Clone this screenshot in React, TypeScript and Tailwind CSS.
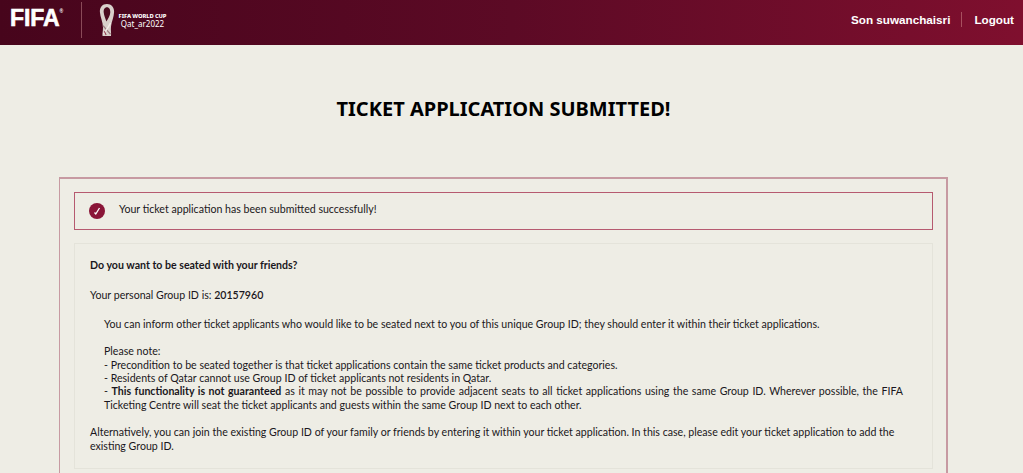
export default function App() {
  return (
    <div className="h-[473px] overflow-hidden bg-[#eeede5] font-['Lato','Noto_Sans',sans-serif] text-[#1a1720]">
      <header className="flex h-[45px] items-center justify-between bg-gradient-to-r from-[#47051c] via-[#5c0a25] to-[#7f0f2e] pl-[10px] pr-[9px]">
        <div className="mb-[5px] flex items-center">
          <span className="mb-[4px] flex w-[54px] items-start font-['Liberation_Sans',sans-serif] text-[23px] leading-none font-bold tracking-[-0.1px] text-white [-webkit-text-stroke:0.6px_white]">
            FIFA<span className="text-[5px] leading-[9px] [-webkit-text-stroke:0]">®</span>
          </span>
          <div className="ml-[17px] h-[36px] w-px bg-[#8a4a58]" />
          <svg width="16" height="34" viewBox="0 0 18 36" preserveAspectRatio="none" className="ml-[17px]" fill="none">
            <path d="M9 1C3.500 1 .8 4.500 1 9.500C1.300 15 4.500 20 4.500 26C4.500 30 3.500 33 4 35L13.500 35C14 32 13 29 13.500 25C14 20 16.800 15 17 9.500C17.200 4.500 14 1 9 1Z" fill="#d9d0cb" />
            <path d="M9 4.500C6.200 4.500 5 7 5.300 10C5.600 13 7.200 16.500 8.300 19.500C10.500 16.500 12.500 13 12.700 10C12.900 7 11.500 4.500 9 4.500Z" fill="#4b0a1f" />
            <path d="M4.500 24C7 27 10 30 13 33" stroke="#9d7c80" strokeWidth="1.500" />
            <path d="M13 21C11 25 8 29 5 33" stroke="#f3ece8" strokeWidth="1.500" />
            <path d="M6 30L8 34" stroke="#8f3a4d" strokeWidth="1.200" />
          </svg>
          <div className="ml-[3px] flex w-[49px] flex-col items-center font-['Noto_Sans',sans-serif] text-white">
            <span className="text-[5.800px] leading-[7px] font-extrabold tracking-[-0.1px] whitespace-nowrap">FIFA WORLD CUP</span>
            <span className="text-[8px] leading-[8px] whitespace-nowrap">Qat_ar2022</span>
          </div>
        </div>
        <div className="mb-[5px] flex items-center font-['Liberation_Sans',sans-serif] text-[11.700px] font-bold text-white">
          <span>Son suwanchaisri</span>
          <div className="mr-[12px] ml-[11px] h-[15px] w-px bg-[#a8505f]" />
          <span>Logout</span>
        </div>
      </header>
      <div className="w-[1007px]">
        <h1 className="mt-[50px] text-center font-['Noto_Sans',sans-serif] text-[20px] leading-[27px] font-bold text-black">TICKET APPLICATION SUBMITTED!</h1>
        <main className="mx-[59px] mt-[55px] border border-t-2 border-r-2 border-[#c79aa2] pt-[13px] pr-[13px] pb-[20px] pl-[14px]">
          <div className="flex h-[38px] items-center border border-[#b65a70] pl-[14px]">
            <span className="flex h-[16px] w-[16px] items-center justify-center rounded-full bg-[#8a1538]">
              <svg width="10" height="10" viewBox="0 0 10 10" fill="none">
                <path d="M2.500 6.500L3.800 8L7.500 2" stroke="white" strokeWidth="1.300" />
              </svg>
            </span>
            <span className="mb-[4px] ml-[14px] text-[10.600px] leading-[14px]">Your ticket application has been submitted successfully!</span>
          </div>
          <section className="mt-[13px] h-[226px] border border-[#e4e3da] px-[15px] pt-[15px] text-[10.600px] leading-[13.400px]">
            <p className="font-bold">Do you want to be seated with your friends?</p>
            <p className="mt-[17px]">Your personal Group ID is: <b className="font-semibold">20157960</b></p>
            <div className="mt-[15px] pr-[14px] pl-[14px]">
              <p>You can inform other ticket applicants who would like to be seated next to you of this unique Group ID; they should enter it within their ticket applications.</p>
              <p className="mt-[14px]">Please note:</p>
              <p>- Precondition to be seated together is that ticket applications contain the same ticket products and categories.</p>
              <p>- Residents of Qatar cannot use Group ID of ticket applicants not residents in Qatar.</p>
              <p className="text-justify">- <b>This functionality is not guaranteed</b> as it may not be possible to provide adjacent seats to all ticket applications using the same Group ID. Wherever possible, the FIFA Ticketing Centre will seat the ticket applicants and guests within the same Group ID next to each other.</p>
            </div>
            <p className="mt-[14px]">Alternatively, you can join the existing Group ID of your family or friends by entering it within your ticket application. In this case, please edit your ticket application to add the existing Group ID.</p>
          </section>
        </main>
      </div>
    </div>
  );
}
